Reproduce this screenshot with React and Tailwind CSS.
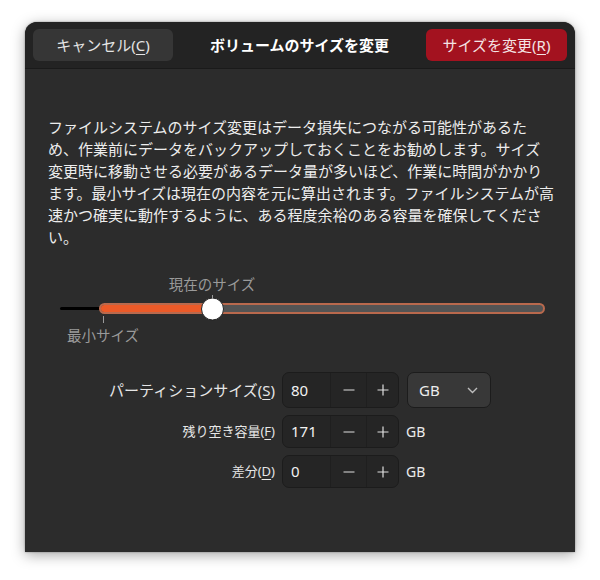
import React from "react";

const font = "font-['Noto_Sans','Noto_Sans_CJK_JP',sans-serif]";

function Mn({ children }) {
  return <span className="underline underline-offset-[3px] decoration-1">{children}</span>;
}

function MinusIcon() {
  return (
    <svg width="14" height="14" viewBox="0 0 14 14" fill="none">
      <path d="M1.5 7h11" stroke="#e0e0e0" strokeWidth="1.2" />
    </svg>
  );
}

function PlusIcon() {
  return (
    <svg width="14" height="14" viewBox="0 0 14 14" fill="none">
      <path d="M1.5 7h11M7 1.5v11" stroke="#e0e0e0" strokeWidth="1.2" />
    </svg>
  );
}

function SpinBox({ value, tall }) {
  return (
    <div className={`flex w-[117px] ${tall ? "h-[36px]" : "h-[33px]"} rounded-[7px] border border-[#1c1c1c] bg-[#252525] overflow-hidden`}>
      <div className="w-[47px] flex items-center pl-[8px] text-[15px] text-[#f2f2f2]">{value}</div>
      <button className="w-[36px] flex items-center justify-center border-l border-[#1f1f1f]">
        <MinusIcon />
      </button>
      <button className="flex-1 flex items-center justify-center border-l border-[#1f1f1f]">
        <PlusIcon />
      </button>
    </div>
  );
}

export default function App() {
  return (
    <div className={`min-h-[580px] bg-white pt-[22px] pl-[25px] ${font}`}>
      <div className="w-[550px] h-[530px] bg-[#2c2c2c] rounded-t-[12px] shadow-[0_3px_14px_rgba(0,0,0,0.35),0_0_2px_rgba(0,0,0,0.4)] overflow-hidden flex flex-col">
        {/* header */}
        <div className="h-[47px] bg-[#232323] border-b border-[#1a1a1a] flex items-center justify-between px-[8px]">
          <button className="w-[140px] h-[32px] rounded-[6px] bg-[#363636] text-[15px] text-[#e4e4e4]">
            キャンセル(<Mn>C</Mn>)
          </button>
          <div className="text-[15px] font-bold text-white">ボリュームのサイズを変更</div>
          <button className="w-[141px] h-[32px] rounded-[6px] bg-[#a3121f] text-[15px] text-[#f4e4e4]">
            サイズを変更(<Mn>R</Mn>)
          </button>
        </div>

        {/* description */}
        <p className="mt-[47px] px-[23px] text-[15px] leading-[22px] text-[#ededed] whitespace-nowrap">
          ファイルシステムのサイズ変更はデータ損失につながる可能性があるた
          <br />
          め、作業前にデータをバックアップしておくことをお勧めします。サイズ
          <br />
          変更時に移動させる必要があるデータ量が多いほど、作業に時間がかかり
          <br />
          ます。最小サイズは現在の内容を元に算出されます。ファイルシステムが高
          <br />
          速かつ確実に動作するように、ある程度余裕のある容量を確保してくださ
          <br />
          い。
        </p>

        {/* slider */}
        <div className="relative mt-[22px] h-[76px] pl-[35px] pr-[30px] pt-[33px]">
          <div className="flex items-center h-[11px]">
            <div className="w-[39px] h-[3px] bg-black rounded-l-full" />
            <div className="relative flex-1 h-[11px] rounded-full border-2 border-[#b9694d] bg-[#545454]">
              <div className="h-full w-[112px] bg-[#ec5a28] rounded-l-full" />
              <div className="absolute left-[100px] top-1/2 -translate-y-1/2 w-[23px] h-[23px] rounded-full bg-white border border-[#222]" />
            </div>
          </div>
          {/* current mark */}
          <div className="absolute left-[187px] top-[4px] w-0 flex justify-center">
            <span className="whitespace-nowrap text-[14.5px] leading-[20px] text-[#9a9a9a]">現在のサイズ</span>
          </div>
          <div className="absolute left-[187px] top-[25px] w-px h-[4px] bg-[#9a9a9a]" />
          {/* minimum mark */}
          <div className="absolute left-[78px] top-[46px] w-px h-[7px] bg-[#9a9a9a]" />
          <div className="absolute left-[78px] top-[55px] w-0 flex justify-center">
            <span className="whitespace-nowrap text-[14.5px] leading-[20px] text-[#9a9a9a]">最小サイズ</span>
          </div>
        </div>

        {/* form */}
        <div className="mt-[26px] grid grid-cols-[250px_117px_auto] gap-x-[7px] gap-y-[7px] items-center">
          <div className="text-right text-[15px] text-[#e6e6e6]">
            パーティションサイズ(<Mn>S</Mn>)
          </div>
          <SpinBox value="80" tall />
          <div className="ml-px w-[84px] h-[36px] rounded-[7px] border border-[#1c1c1c] bg-[#383838] flex items-center justify-between pl-[11px] pr-[12px] text-[15px] text-[#ededed]">
            <span>GB</span>
            <svg width="11" height="7" viewBox="0 0 11 7" fill="none">
              <path d="M1 1l4.5 4.5L10 1" stroke="#bdbdbd" strokeWidth="1.4" />
            </svg>
          </div>

          <div className="text-right text-[13px] text-[#e6e6e6]">
            残り空き容量(<Mn>F</Mn>)
          </div>
          <SpinBox value="171" />
          <div className="text-[14px] text-[#ededed]">GB</div>

          <div className="text-right text-[13px] text-[#e6e6e6]">
            差分(<Mn>D</Mn>)
          </div>
          <SpinBox value="0" />
          <div className="text-[14px] text-[#ededed]">GB</div>
        </div>
      </div>
    </div>
  );
}
